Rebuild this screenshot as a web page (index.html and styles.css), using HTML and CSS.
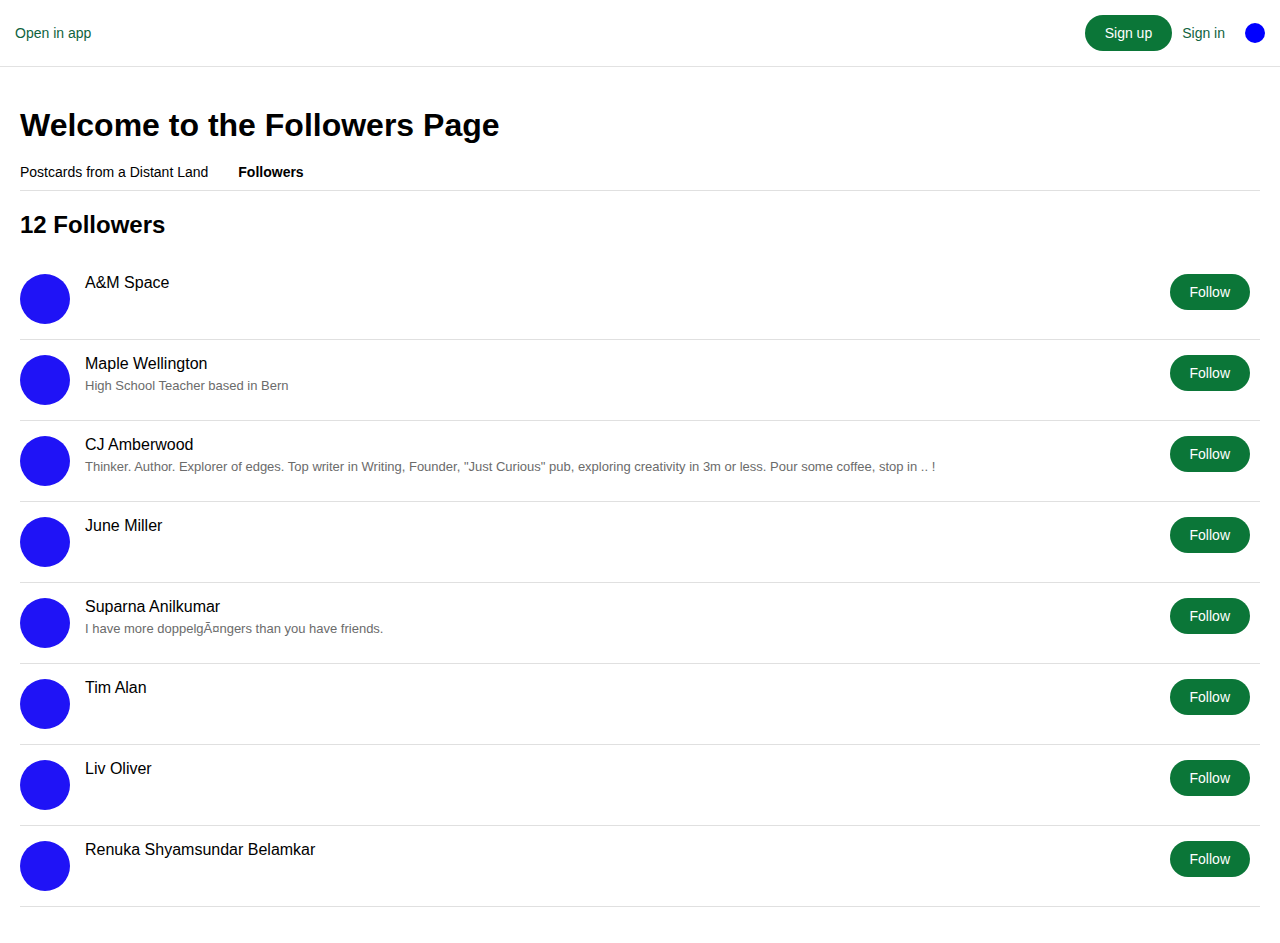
FILE: index.html
```html
<!DOCTYPE html>
<html lang="en">
<head>
<meta charset="utf-8">
<title>Followers</title>
<link rel="stylesheet" href="styles.css">
</head>
<body>
<header class="topbar">
  <a class="open-app" href="#">Open in app</a>
  <div class="topbar-right">
    <button class="btn">Sign up</button>
    <a class="sign-in" href="#">Sign in</a>
    <span class="user-dot"></span>
  </div>
</header>
<main class="page">
  <h1 class="title">Welcome to the Followers Page</h1>
  <nav class="tabs">
    <a class="tab" href="#">Postcards from a Distant Land</a>
    <a class="tab active" href="#">Followers</a>
  </nav>
  <h2 class="count">12 Followers</h2>
  <ul class="list">
    <li class="row"><span class="avatar"></span><div class="info"><div class="name">A&amp;M Space</div></div><button class="btn">Follow</button></li>
    <li class="row"><span class="avatar"></span><div class="info"><div class="name">Maple Wellington</div><div class="bio">High School Teacher based in Bern</div></div><button class="btn">Follow</button></li>
    <li class="row"><span class="avatar"></span><div class="info"><div class="name">CJ Amberwood</div><div class="bio">Thinker. Author. Explorer of edges. Top writer in Writing, Founder, "Just Curious" pub, exploring creativity in 3m or less. Pour some coffee, stop in .. !</div></div><button class="btn">Follow</button></li>
    <li class="row"><span class="avatar"></span><div class="info"><div class="name">June Miller</div></div><button class="btn">Follow</button></li>
    <li class="row"><span class="avatar"></span><div class="info"><div class="name">Suparna Anilkumar</div><div class="bio">I have more doppelgÃ¤ngers than you have friends.</div></div><button class="btn">Follow</button></li>
    <li class="row"><span class="avatar"></span><div class="info"><div class="name">Tim Alan</div></div><button class="btn">Follow</button></li>
    <li class="row"><span class="avatar"></span><div class="info"><div class="name">Liv Oliver</div></div><button class="btn">Follow</button></li>
    <li class="row"><span class="avatar"></span><div class="info"><div class="name">Renuka Shyamsundar Belamkar</div></div><button class="btn">Follow</button></li>
  </ul>
</main>
</body>
</html>
```

FILE: styles.css
```css
* { box-sizing: border-box; }
body {
  margin: 0;
  font-family: "Liberation Sans", Arial, Helvetica, sans-serif;
  color: #000;
  background: #fff;
}
a { text-decoration: none; }
.topbar {
  height: 67px;
  padding: 0 15px;
  display: flex;
  align-items: center;
  justify-content: space-between;
  border-bottom: 1px solid #e2e2e2;
}
.open-app {
  font-size: 14px;
  color: #0f6340;
}
.topbar-right {
  display: flex;
  align-items: center;
}
.btn {
  height: 36px;
  padding: 0 20px;
  border: none;
  border-radius: 18px;
  background: #0b7638;
  color: #fff;
  font-family: inherit;
  font-size: 14px;
  cursor: pointer;
}
.sign-in {
  margin-left: 10px;
  font-size: 14px;
  color: #0f6340;
}
.user-dot {
  margin-left: 20px;
  width: 20px;
  height: 20px;
  border-radius: 50%;
  background: #0000ff;
}
.page {
  padding: 20px 20px;
}
.title {
  margin: 20px 0 20px;
  font-size: 32px;
  font-weight: bold;
}
.tabs {
  display: flex;
  gap: 30px;
  padding-bottom: 10px;
  border-bottom: 1px solid #e0e0e0;
}
.tab {
  font-size: 14px;
  line-height: 16px;
  color: #000;
}
.tab.active { font-weight: bold; }
.count {
  margin: 20px 0;
  font-size: 24px;
  font-weight: bold;
}
.list {
  list-style: none;
  margin: 0;
  padding: 0;
}
.row {
  display: flex;
  align-items: flex-start;
  padding: 15px 10px 15px 0;
  border-bottom: 1px solid #e0e0e0;
}
.avatar {
  flex: none;
  width: 50px;
  height: 50px;
  border-radius: 50%;
  background: #1f13f6;
}
.info {
  flex: 1;
  margin-left: 15px;
}
.name {
  font-size: 16px;
  line-height: 18px;
}
.bio {
  margin-top: 5px;
  font-size: 13px;
  line-height: 15px;
  color: #6b6b6b;
}
```
